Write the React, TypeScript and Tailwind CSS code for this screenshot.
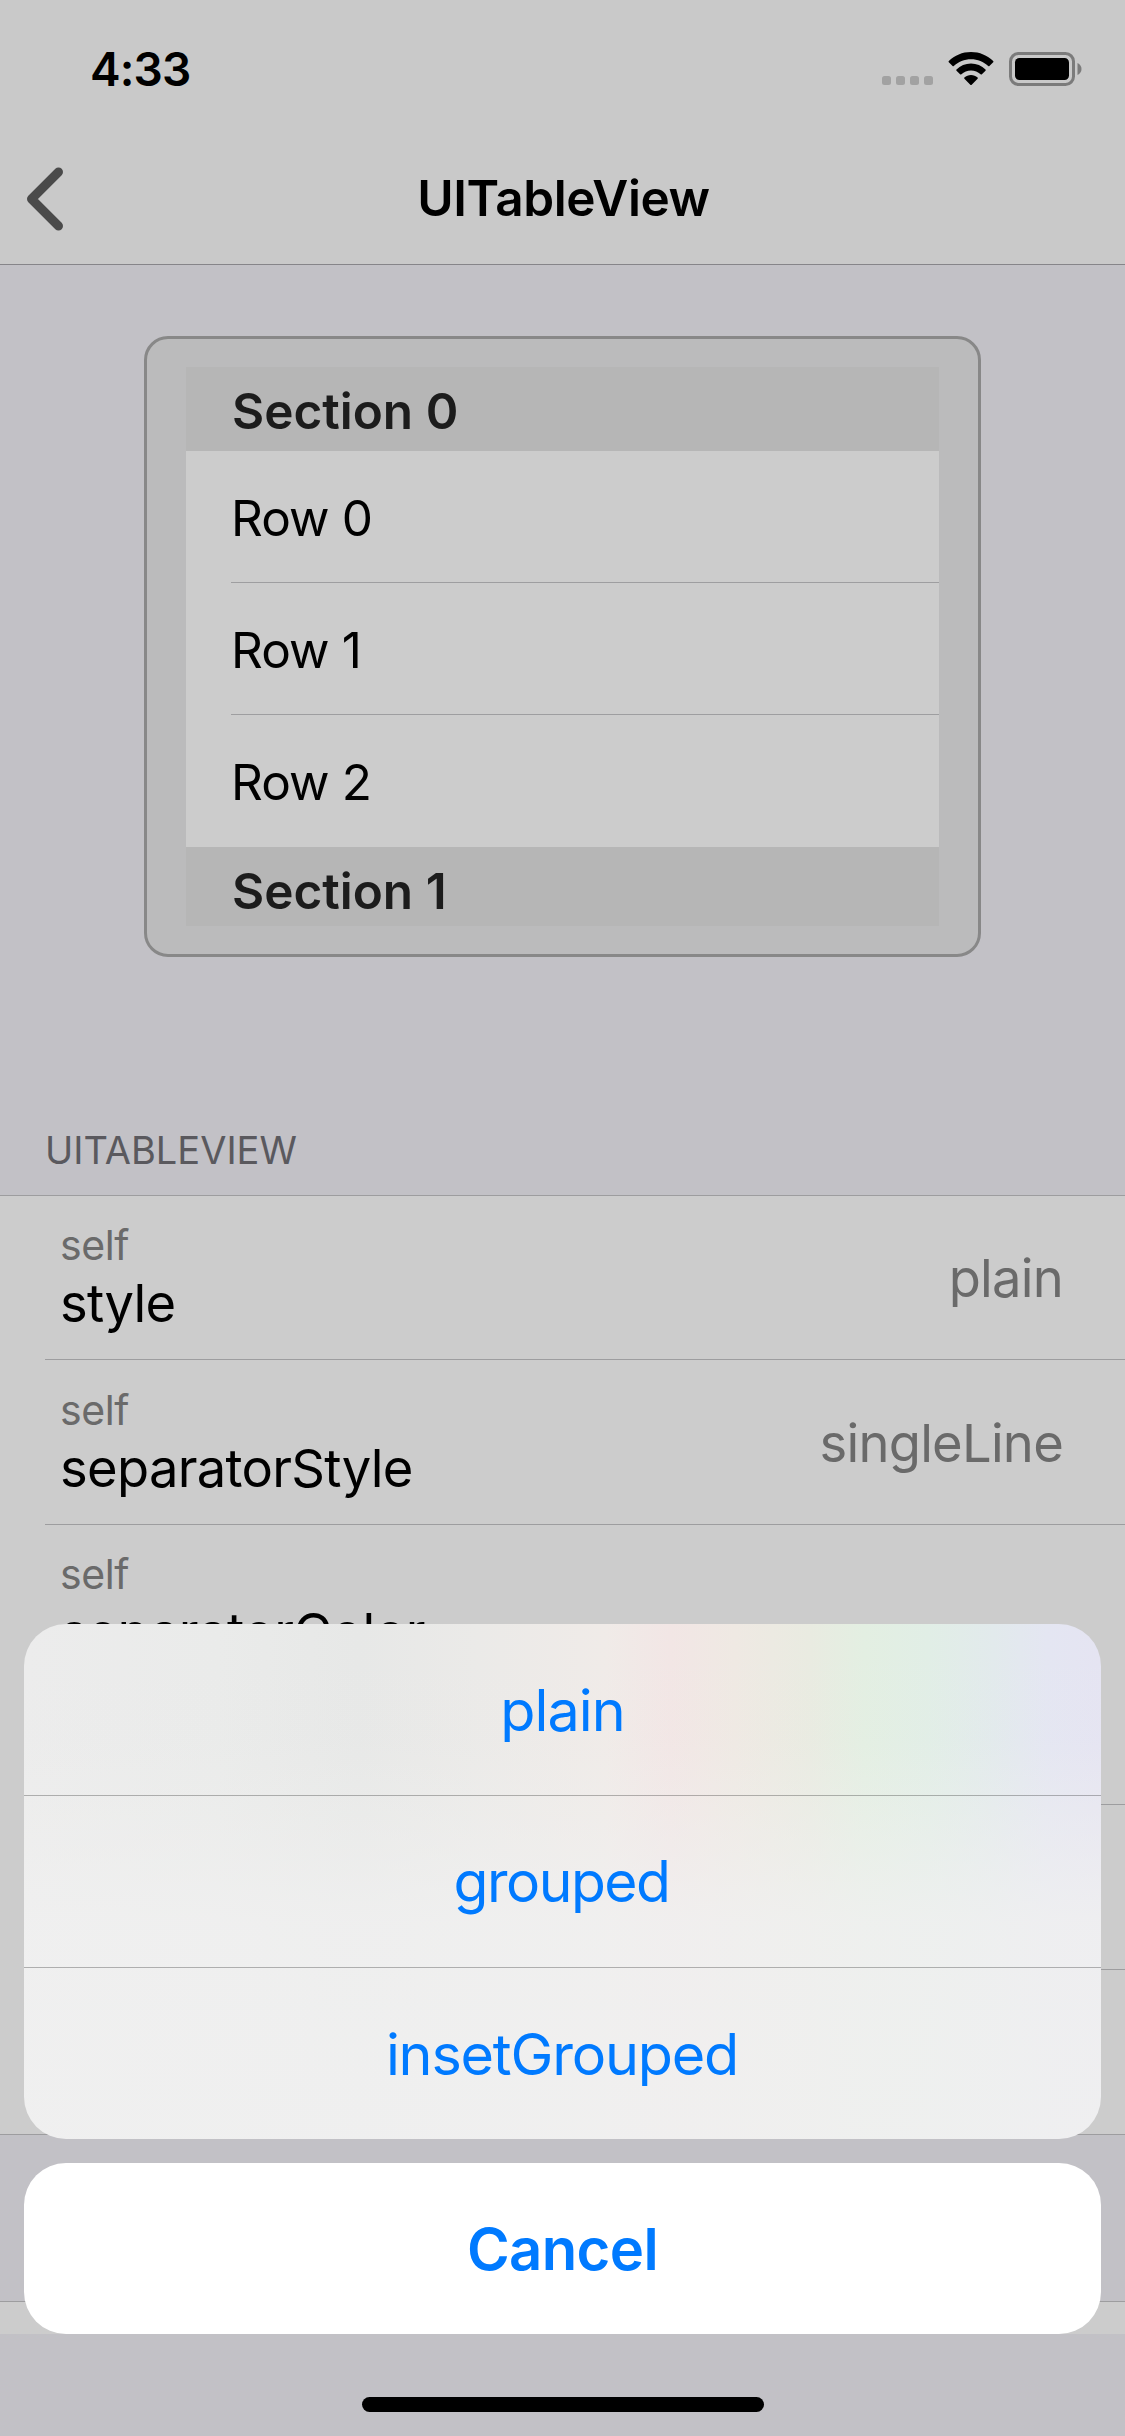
import React from "react";

function StatusBar() {
  return (
    <div className="flex h-[132px] justify-between pl-[90px] pr-[43px]">
      <span className="pt-[39px] text-[46px] font-semibold leading-[60px] tracking-[-0.86px] text-black">4:33</span>
      <div className="flex pt-[52px]">
        <div className="mt-6 flex gap-[5px]">
          {[0, 1, 2, 3].map((i) => (
            <span key={i} className="size-[9px] rounded-[2.5px] bg-[#a2a2a2]" />
          ))}
        </div>
        <svg className="ml-[15px] h-[34px] w-[46px]" viewBox="0 0 46 34" fill="black">
          <path d="M23 7.200c6.600 0 12.700 2.600 17.200 6.800.4.3.9.3 1.200 0l3.800-3.700c.4-.4.4-.9 0-1.300C39.400 3.400 31.600 0 23 0S6.600 3.400.8 9c-.4.4-.4.900 0 1.300l3.800 3.700c.3.3.8.3 1.200 0C10.300 9.800 16.400 7.200 23 7.200z" />
          <path d="M23 18.600c3.700 0 7 1.400 9.600 3.700.4.3.9.3 1.300 0l3.600-3.600c.4-.4.4-1 0-1.300-3.800-3.600-8.900-5.800-14.500-5.800S12.300 13.800 8.500 17.400c-.4.3-.4.900 0 1.300l3.600 3.600c.4.3.9.3 1.300 0 2.600-2.300 5.900-3.700 9.600-3.700z" />
          <path d="M29.600 26.700c.4-.4.4-1 0-1.300-1.800-1.500-4.100-2.400-6.600-2.400s-4.800.9-6.600 2.400c-.4.3-.4.900 0 1.300l5.900 6c.4.4 1 .4 1.400 0z" />
        </svg>
        <svg className="ml-[15px] h-[34px] w-[73px]" viewBox="0 0 73 34" fill="none">
          <rect x="1.500" y="1.500" width="63" height="31" rx="8" stroke="#7b7b7b" strokeWidth="3" />
          <rect x="6" y="6" width="54" height="22" rx="4.500" fill="black" />
          <path d="M68.500 11v12c2.500-1 4-3.400 4-6s-1.500-5-4-6z" fill="#7b7b7b" />
        </svg>
      </div>
    </div>
  );
}

function NavBar() {
  return (
    <div className="grid h-[132px] grid-cols-[1fr_auto_1fr] items-center">
      <svg className="ml-[26px] mt-[1px] h-[64px] w-[38px]" viewBox="0 0 38 64" fill="none">
        <path d="M32.500 5 5.500 32 32.500 59" stroke="#4a4a4a" strokeWidth="9" strokeLinecap="round" strokeLinejoin="round" />
      </svg>
      <h1 className="pl-[2px] text-[49.5px] font-semibold leading-[60px] tracking-[-0.4px] text-black">UITableView</h1>
      <span />
    </div>
  );
}

function SectionHeader({ title }: { title: string }) {
  return (
    <div className="h-[84px] shrink-0 bg-[#b6b6b6] pl-[46px] pt-[14px] text-[49.5px] font-semibold leading-[60px] text-[#1c1c1c]">
      {title}
    </div>
  );
}

function PreviewRow({ title, last }: { title: string; last?: boolean }) {
  return (
    <div className="h-[132px] shrink-0 bg-[#cccccc] pl-[45px]">
      <div
        className={
          "h-full pt-[37px] text-[49.5px] leading-[60px] tracking-[-0.9px] text-black " +
          (last ? "" : "border-b border-[#9e9ea0]")
        }
      >
        {title}
      </div>
    </div>
  );
}

function Preview() {
  return (
    <div className="mx-auto mt-[71px] flex h-[621px] w-[837px] flex-col rounded-[24px] border-[3px] border-[#888888] bg-[#bbbbbc] px-[39px] py-[28px]">
      <div className="flex flex-1 flex-col overflow-hidden">
        <SectionHeader title="Section 0" />
        <PreviewRow title="Row 0" />
        <PreviewRow title="Row 1" />
        <PreviewRow title="Row 2" last />
        <SectionHeader title="Section 1" />
      </div>
    </div>
  );
}

function PropertyRow({ owner, name, value }: { owner: string; name: string; value?: string }) {
  return (
    <div className="h-[165px] pl-[45px]">
      <div className="flex h-full items-center justify-between border-b border-[#9d9d9f] pl-[15px] pr-[62px]">
        <div className="pt-[2px]">
          <div className="text-[41px] leading-[50px] tracking-[-0.4px] text-[#6a6a6a]">{owner}</div>
          <div className="text-[52.5px] leading-[67px] tracking-[-0.7px] text-black">{name}</div>
        </div>
        <div className="pt-[2px] text-[52.5px] leading-[64px] tracking-[-0.75px] text-[#6a6a6a]">{value}</div>
      </div>
    </div>
  );
}

function PropertyList() {
  return (
    <div className="bg-[#cccccc] shadow-[inset_0_1px_0_#9d9d9f]">
      <PropertyRow owner="self" name="style" value="plain" />
      <PropertyRow owner="self" name="separatorStyle" value="singleLine" />
      <div className="h-[280px] pl-[45px]">
        <div className="h-full border-b border-[#9d9d9f] pl-[15px] pt-6">
          <div className="text-[41px] leading-[50px] tracking-[-0.4px] text-[#6a6a6a]">self</div>
          <div className="text-[52.5px] leading-[67px] tracking-[-0.45px] text-black">separatorColor</div>
        </div>
      </div>
      <div className="h-[165px] pl-[45px]">
        <div className="h-full border-b border-[#9d9d9f]" />
      </div>
      <div className="h-[165px] border-b border-[#9d9d9f]" />
    </div>
  );
}

function ActionSheet() {
  return (
    <div className="absolute inset-x-6 bottom-[102px] flex flex-col gap-6 text-center text-[#007aff]">
      <div className="overflow-hidden rounded-[42px] bg-[linear-gradient(to_bottom,rgba(239,239,239,0)_0%,rgba(239,239,239,0.05)_22%,rgba(240,240,239,0.4)_38%,rgba(240,240,240,0.85)_58%,rgba(240,240,240,0.9)_100%),linear-gradient(to_right,#ececec_0%,#eaebea_18%,#e7e8e7_31%,#ebeae8_42%,#f0ebe8_54%,#f2e6e5_60%,#efe9e3_66%,#e9ebe1_73%,#e3efe2_78%,#e1eee6_84%,#e2eaec_90%,#e4e6f2_95%,#e5e4f2_100%)]">
        <div className="h-[172px] border-b border-black/27 pt-[51px] text-[57.5px] leading-[70px] tracking-[-1px]">plain</div>
        <div className="h-[172px] border-b border-black/27 pt-[51px] pr-[2px] text-[57px] leading-[70px] tracking-[-1.5px]">grouped</div>
        <div className="h-[171px] pt-[51px] pr-[1px] text-[57.5px] leading-[70px] tracking-[-1.2px]">insetGrouped</div>
      </div>
      <div className="h-[171px] rounded-[42px] bg-white pt-[51px] text-[58px] font-semibold leading-[70px] tracking-[-0.62px]">Cancel</div>
    </div>
  );
}

export default function App() {
  return (
    <div className="relative flex h-[2436px] w-[1125px] flex-col overflow-hidden bg-[#c2c1c6] font-['Inter',sans-serif]">
      <header className="h-[265px] shrink-0 border-b border-[#868589] bg-[#c9c9c9]">
        <StatusBar />
        <NavBar />
      </header>
      <main className="h-[2069px] shrink-0 overflow-hidden">
        <Preview />
        <h2 className="mt-[163px] h-[75px] pl-[45px] text-[38px] leading-[60px] text-[#5a595e]">UITABLEVIEW</h2>
        <PropertyList />
        <div className="mt-[166px] h-[165px] border-t border-[#9d9d9f] bg-[#cccccc]" />
      </main>
      <ActionSheet />
      <div className="mx-auto mt-[63px] h-[15px] w-[402px] shrink-0 rounded-full bg-black" />
    </div>
  );
}
